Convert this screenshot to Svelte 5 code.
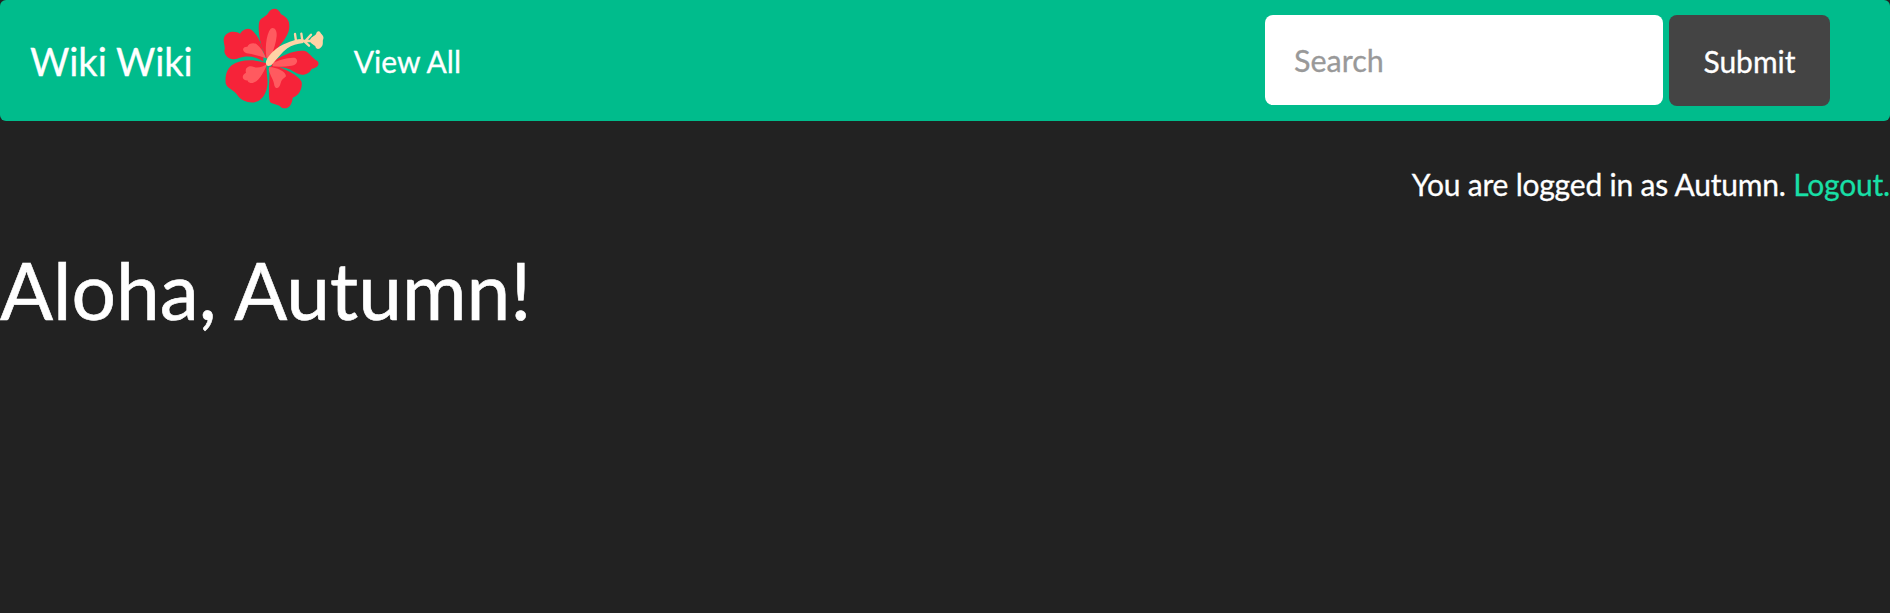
<script>
  let query = "";
</script>

<nav class="navbar">
  <a class="brand" href="#home">Wiki Wiki</a>
  <svg class="logo" viewBox="0 0 390 360" width="130" height="120" aria-hidden="true">
    <g fill="#f62339">
      <path d="M168 172C152 135 143 95 147 65C150 48 168 50 177 32C187 18 207 20 213 40C225 46 240 55 238 80C235 110 205 135 186 165Z" />
      <path d="M160 172C160 140 150 110 125 87C110 78 98 88 90 98C75 88 50 90 42 110C38 125 48 135 43 150C45 172 70 180 85 172C110 162 135 165 160 182Z" />
      <path d="M168 186C130 174 90 175 65 193C50 205 45 225 47 247C52 264 70 265 82 282C95 302 125 310 145 300C165 290 175 260 172 235Z" />
      <path d="M178 200C180 240 173 280 180 303C190 312 205 308 215 320C235 328 247 310 248 290C265 285 278 265 275 243C265 222 225 205 190 190Z" />
      <path d="M183 187C210 163 260 145 285 150C300 156 305 170 322 180C332 190 320 202 305 203C300 217 280 227 260 217C240 203 220 195 190 200Z" />
    </g>
    <g fill="#ff5a5f">
      <path d="M172 178C163 150 168 100 182 83C192 76 202 88 200 105C198 125 192 145 182 168Z" />
      <path d="M168 172C150 165 130 160 110 157C93 150 98 136 112 137C116 127 132 124 140 130C152 140 162 155 168 172Z" />
      <path d="M172 188C165 205 150 240 128 246C115 248 112 238 112 238C96 240 93 222 108 215C103 198 120 192 132 198C145 203 160 196 172 188Z" />
      <path d="M178 198C200 200 228 210 228 226C222 232 214 236 212 246C208 266 194 266 192 248C190 235 178 220 176 205Z" />
      <path d="M188 186C205 178 238 168 256 171C266 177 262 192 245 194C225 197 205 198 188 196Z" />
    </g>
    <g fill="#ffd3a6">
      <path d="M168 188C165 172 195 140 225 128C245 120 262 114 280 114L280 126C262 128 245 132 232 142C215 155 200 175 188 188C180 197 170 197 168 188Z" />
      <path d="M300 118C302 108 314 105 318 100C320 90 328 88 332 96C336 102 342 104 340 114C336 120 342 130 334 138C328 146 318 146 316 136C310 130 300 128 300 118Z" />
    </g>
    <path
      d="M260 120H310M258 120L255 99M277 119L274 98M288 118L303 101M284 122L297 134"
      fill="none"
      stroke="#ffd3a6"
      stroke-width="7"
      stroke-linecap="round" />
  </svg>
  <a class="link" href="#all">View All</a>
  <form class="search" on:submit|preventDefault>
    <input type="text" placeholder="Search" bind:value={query} />
    <button type="submit">Submit</button>
  </form>
</nav>

<main>
  <p class="session">You are logged in as Autumn. <a href="#logout">Logout.</a></p>
  <h1>Aloha, Autumn!</h1>
</main>

<style>
  :global(body) {
    background: #222;
    color: #fff;
    font-family: Lato, "Liberation Sans", sans-serif;
    font-size: 30px;
    min-height: 613px;
    -webkit-text-stroke: 0.3px currentColor;
  }
  a {
    text-decoration: none;
  }
  .navbar {
    display: flex;
    align-items: center;
    height: 121px;
    padding-left: 30px;
    padding-right: 60px;
    background: #00bc8c;
    border-radius: 6px;
    box-sizing: border-box;
  }
  .brand {
    color: #fff;
    font-size: 38px;
  }
  .logo {
    flex: none;
    margin-left: 17px;
  }
  .link {
    color: #fff;
    font-size: 30px;
    margin-left: 14px;
  }
  .search {
    display: flex;
    align-items: flex-start;
    gap: 6px;
    margin-left: auto;
  }
  input {
    width: 398px;
    height: 90px;
    box-sizing: border-box;
    padding: 0 29px;
    border: none;
    border-radius: 8px;
    background: #fff;
    font: inherit;
    font-size: 30.5px;
    color: #444;
    outline: none;
  }
  input::placeholder {
    color: #999;
    opacity: 1;
  }
  button {
    width: 161px;
    height: 91px;
    border: none;
    border-radius: 8px;
    background: #444;
    color: #fff;
    font: inherit;
  }
  main {
    display: flow-root;
  }
  .session {
    margin: 43px 0 0;
    line-height: 40px;
    letter-spacing: -0.2px;
    text-align: right;
  }
  .session a {
    color: #18dfa6;
  }
  h1 {
    margin: 43px 0 0;
    font-size: 78.5px;
    font-weight: 400;
    line-height: 1.1;
    -webkit-text-stroke: 0.6px currentColor;
  }
</style>
